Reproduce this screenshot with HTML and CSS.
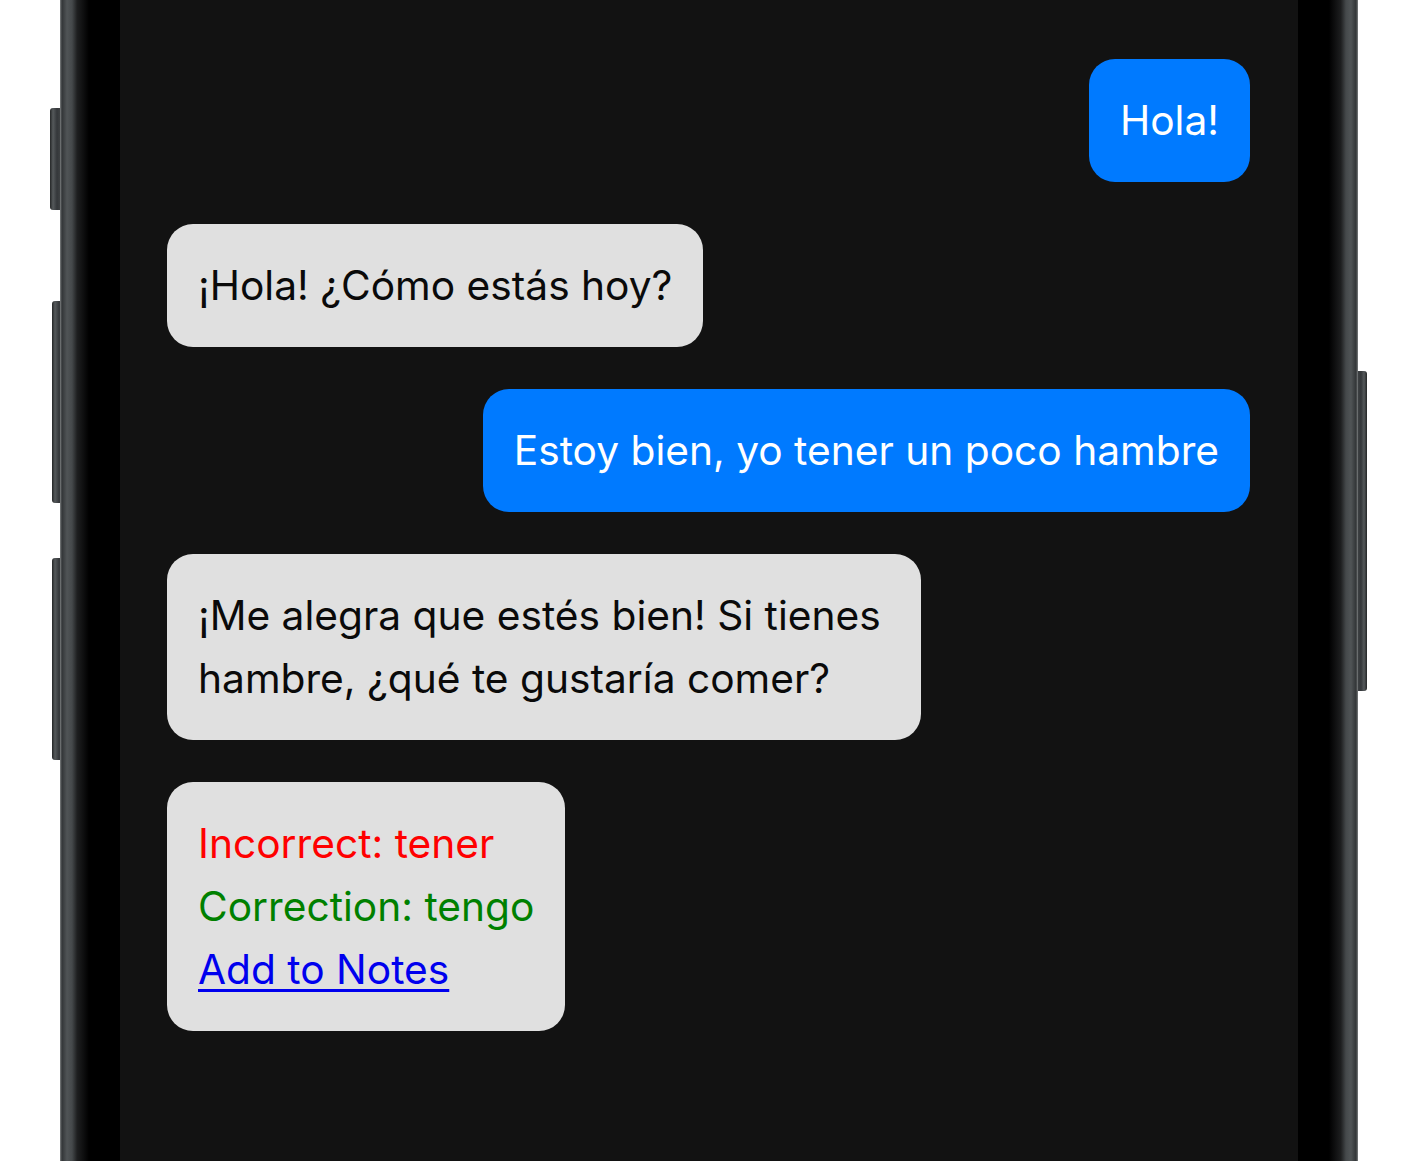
FILE: index.html
```html
<!DOCTYPE html>
<html lang="es">
<head>
    <meta charset="UTF-8">
    <meta name="viewport" content="width=device-width, initial-scale=1.0">
    <title>Chat</title>
    <link rel="stylesheet" href="styles.css">
</head>
<body>
    <div class="phone">
        <span class="side-btn btn-action"></span>
        <span class="side-btn btn-vol-up"></span>
        <span class="side-btn btn-vol-down"></span>
        <span class="side-btn btn-power"></span>

        <div class="bezel">
            <div class="screen">
                <div class="chat">
                    <div class="bubble user">Hola!</div>
                    <div class="bubble bot">¡Hola! ¿Cómo estás hoy?</div>
                    <div class="bubble user">Estoy bien, yo tener un poco hambre</div>
                    <div class="bubble bot">¡Me alegra que estés bien! Si tienes hambre, ¿qué te gustaría comer?</div>
                    <div class="bubble bot">
                        <div class="incorrect">Incorrect: tener</div>
                        <div class="correction">Correction: tengo</div>
                        <a href="#" class="add-note">Add to Notes</a>
                    </div>
                </div>
            </div>
        </div>
    </div>
</body>
</html>
```

FILE: styles.css
```css
/* 重置样式 */
* {
    margin: 0;
    padding: 0;
    box-sizing: border-box;
}

html, body {
    height: 100%;
    overflow: hidden;
}

body {
    background-color: #fff;
    font-family: Inter, "Noto Sans", sans-serif;
}

/* 手机外框 */
.phone {
    position: relative;
    width: 1298px;
    height: 1200px;
    margin-left: 60px;
    margin-top: -20px;
    padding: 0 17px;
    background: #3c3f41;
}

.phone::before,
.phone::after {
    content: "";
    position: absolute;
    top: 0;
    bottom: 0;
    width: 17px;
    background: linear-gradient(90deg, #7d8081 0, #333638 2px, #505456 7px, #45494b 12px, #1f2021 17px);
}

.phone::before {
    left: 0;
}

.phone::after {
    right: 0;
    transform: scaleX(-1);
}

.side-btn {
    position: absolute;
    width: 10px;
    border-radius: 3px 0 0 3px;
    background: linear-gradient(90deg, #242627 0, #55595b 3px, #34373a 7px, #3e4143 10px);
}

.btn-action {
    left: -10px;
    top: 128px;
    height: 102px;
}

.btn-vol-up {
    left: -8px;
    width: 8px;
    top: 321px;
    height: 202px;
}

.btn-vol-down {
    left: -8px;
    width: 8px;
    top: 578px;
    height: 202px;
}

.btn-power {
    right: -9px;
    width: 9px;
    top: 391px;
    height: 320px;
    border-radius: 0 3px 3px 0;
    background: linear-gradient(270deg, #242627 0, #55595b 3px, #34373a 6px, #3e4143 9px);
}

.bezel {
    height: 100%;
    padding: 0 43px;
    background: linear-gradient(90deg, #1e1f20 0, #000 12px, #000 calc(100% - 12px), #1e1f20 100%);
}

/* 屏幕 */
.screen {
    height: 100%;
    background-color: #121212;
    padding: 79px 48px 0 47px;
}

.chat {
    display: flex;
    flex-direction: column;
    gap: 42px;
}

.bubble {
    padding: 30px 31px;
    border-radius: 26px;
    font-size: 40.7px;
    line-height: 63px;
}

.bubble.user {
    align-self: flex-end;
    max-width: 800px;
    background-color: #007aff;
    color: #fff;
}

.bubble.bot {
    align-self: flex-start;
    max-width: 754px;
    background-color: #e0e0e0;
    color: #0a0a0a;
}

.incorrect {
    color: #ff0000;
}

.correction {
    color: #008000;
}

.add-note {
    color: #0000ee;
    text-decoration: underline;
    text-decoration-thickness: 3px;
    text-underline-offset: 5px;
}
```
